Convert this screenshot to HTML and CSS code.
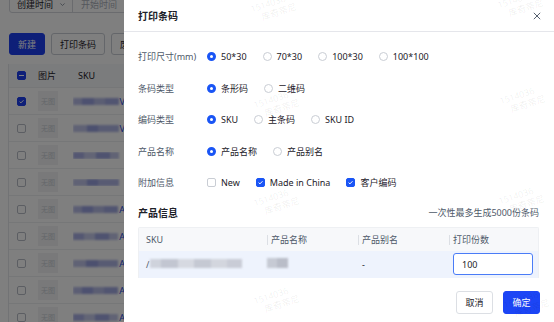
FILE: index.html
```html
<!DOCTYPE html>
<html lang="zh">
<head>
<meta charset="utf-8">
<title>打印条码</title>
<link rel="stylesheet" href="styles.css">
</head>
<body>
<div class="bg">
  <div class="filters">
    <div class="sel"><span>创建时间</span><svg class="chev" viewBox="0 0 10 10" width="7" height="7"><path d="M2 3.5 L5 6.5 L8 3.5" fill="none" stroke="#86909c" stroke-width="1.3"/></svg></div>
    <div class="range"><span>开始时间</span><span class="arr">→</span></div>
  </div>
  <div class="toolbar">
    <button class="bbtn primary">新建</button>
    <button class="bbtn">打印条码</button>
    <button class="bbtn">废弃</button>
  </div>
  <div class="list">
    <div class="lrow lhead"><span class="lcb ind"></span><span class="limg-h">图片</span><span class="lsku-h">SKU</span></div>
    <div class="lrow"><span class="lcb on"><svg viewBox="0 0 10 10"><path d="M2.3 5.2 L4.2 7 L7.8 3.2" fill="none" stroke="#fff" stroke-width="1.4"/></svg></span><span class="limg">无图</span><span class="lsku"><i class="b1"></i><b>V</b></span></div>
    <div class="lrow"><span class="lcb"></span><span class="limg">无图</span><span class="lsku"><i class="b2"></i><b>V</b></span></div>
    <div class="lrow"><span class="lcb"></span><span class="limg">无图</span><span class="lsku"><i class="b3"></i><b></b></span></div>
    <div class="lrow"><span class="lcb"></span><span class="limg">无图</span><span class="lsku"><i class="b2"></i><b></b></span></div>
    <div class="lrow"><span class="lcb"></span><span class="limg">无图</span><span class="lsku"><i class="b1"></i><b>A</b></span></div>
    <div class="lrow"><span class="lcb"></span><span class="limg">无图</span><span class="lsku"><i class="b3"></i><b>A</b></span></div>
    <div class="lrow"><span class="lcb"></span><span class="limg">无图</span><span class="lsku"><i class="b2"></i><b>A</b></span></div>
    <div class="lrow"><span class="lcb"></span><span class="limg">无图</span><span class="lsku"><i class="b1"></i><b>A</b></span></div>
    <div class="lrow"><span class="lcb"></span><span class="limg">无图</span><span class="lsku"><i class="b3"></i><b>A</b></span></div>
  </div>
</div>
<div class="mask"></div>
<aside class="drawer">
  <div class="d-head">
    <span class="d-title">打印条码</span>
    <svg class="close" viewBox="0 0 10 10" width="8" height="8"><path d="M1 1 L9 9 M9 1 L1 9" stroke="#4e5969" stroke-width="1.2"/></svg>
  </div>
  <div class="d-body">
    <div class="frow">
      <span class="flabel">打印尺寸(mm)</span>
      <div class="opts">
        <label class="opt"><span class="radio on"></span>50*30</label>
        <label class="opt"><span class="radio"></span>70*30</label>
        <label class="opt"><span class="radio"></span>100*30</label>
        <label class="opt"><span class="radio"></span>100*100</label>
      </div>
    </div>
    <div class="frow">
      <span class="flabel">条码类型</span>
      <div class="opts">
        <label class="opt"><span class="radio on"></span>条形码</label>
        <label class="opt"><span class="radio"></span>二维码</label>
      </div>
    </div>
    <div class="frow">
      <span class="flabel">编码类型</span>
      <div class="opts">
        <label class="opt"><span class="radio on"></span>SKU</label>
        <label class="opt"><span class="radio"></span>主条码</label>
        <label class="opt"><span class="radio"></span>SKU ID</label>
      </div>
    </div>
    <div class="frow">
      <span class="flabel">产品名称</span>
      <div class="opts">
        <label class="opt"><span class="radio on"></span>产品名称</label>
        <label class="opt"><span class="radio"></span>产品别名</label>
      </div>
    </div>
    <div class="frow">
      <span class="flabel">附加信息</span>
      <div class="opts">
        <label class="opt"><span class="check"></span>New</label>
        <label class="opt"><span class="check on"><svg viewBox="0 0 10 10"><path d="M2.3 5.2 L4.2 7 L7.8 3.2" fill="none" stroke="#fff" stroke-width="1.4"/></svg></span>Made in China</label>
        <label class="opt"><span class="check on"><svg viewBox="0 0 10 10"><path d="M2.3 5.2 L4.2 7 L7.8 3.2" fill="none" stroke="#fff" stroke-width="1.4"/></svg></span>客户编码</label>
      </div>
    </div>
    <div class="sec">
      <span class="sec-title">产品信息</span>
      <span class="sec-hint">一次性最多生成5000份条码</span>
    </div>
    <div class="ptable">
      <div class="prow phead">
        <div class="pc c1">SKU</div>
        <div class="pc c2 sep">产品名称</div>
        <div class="pc c3 sep">产品别名</div>
        <div class="pc c4 sep">打印份数</div>
      </div>
      <div class="prow pbody">
        <div class="pc c1"><span class="slash">/</span><i class="pblur"></i></div>
        <div class="pc c2"><i class="pblur2"></i></div>
        <div class="pc c3">-</div>
        <div class="pc c4"><input class="num" type="text" value="100"></div>
      </div>
    </div>
    <div class="foot">
      <button class="btn">取消</button>
      <button class="btn primary">确定</button>
    </div>
  </div>
  <div class="wm w1"><span>1514036</span><span>库奇蒂尼</span></div>
  <div class="wm w2"><span>1514036</span><span>库奇蒂尼</span></div>
  <div class="wm w3"><span>1514036</span><span>库奇蒂尼</span></div>
  <div class="wm w4"><span>1514036</span><span>库奇蒂尼</span></div>
  <div class="wm w5"><span>1514036</span><span>库奇蒂尼</span></div>
  <div class="wm w6"><span>1514036</span><span>库奇蒂尼</span></div>
  <div class="wm w7"><span>1514036</span><span>库奇蒂尼</span></div>
  <div class="wm w8"><span>1514036</span><span>库奇蒂尼</span></div>
</aside>
</body>
</html>
```

FILE: styles.css
```css
* { box-sizing: border-box; }
html, body { margin: 0; padding: 0; }
body {
  width: 554px;
  height: 322px;
  overflow: hidden;
  position: relative;
  font-family: "Noto Sans", "Noto Sans CJK SC", sans-serif;
  font-size: 9px;
  color: #1d2129;
  background: #fff;
}

/* ---------- background page ---------- */
.bg {
  width: 554px;
  height: 322px;
  background: #fff;
}
.filters {
  display: flex;
  margin: -5px 0 0 9px;
  height: 18px;
  border: 1px solid #d4d7dd;
  border-radius: 3px;
  width: 140px;
}
.sel {
  display: flex;
  align-items: center;
  justify-content: space-between;
  width: 63px;
  padding: 0 6px 0 7px;
  border-right: 1px solid #d4d7dd;
}
.range {
  display: flex;
  align-items: center;
  gap: 8px;
  padding-left: 8px;
  color: #a9aeb8;
}
.toolbar {
  display: flex;
  gap: 6px;
  margin: 20px 0 0 9px;
}
.bbtn {
  height: 22px;
  padding: 0 8px;
  border: 1px solid #c9cdd4;
  border-radius: 3px;
  background: #fff;
  font: inherit;
  color: #1d2129;
}
.bbtn.primary {
  width: 36px;
  background: #1d3ff0;
  border-color: #1d3ff0;
  color: #fff;
}
.list {
  margin: 9px 0 0 8px;
  border-left: 1px solid #e5e6eb;
}
.lrow {
  display: flex;
  align-items: center;
  height: 27px;
  border-bottom: 1px solid #eceef1;
}
.lrow.lhead {
  height: 24px;
  background: #f7f8fa;
}
.lcb {
  width: 9px;
  height: 9px;
  margin-left: 8px;
  border: 1px solid #b8bdc6;
  border-radius: 2px;
  background: #fff;
  display: flex;
  align-items: center;
  justify-content: center;
}
.lcb svg { width: 9px; height: 9px; }
.lcb.on, .lcb.ind { background: #1d3ff0; border-color: #1d3ff0; }
.lcb.ind::after {
  content: "";
  width: 5px;
  height: 1.5px;
  background: #fff;
}
.limg-h { margin-left: 12px; }
.lsku-h { margin-left: 22px; }
.limg {
  margin-left: 12px;
  width: 20px;
  height: 20px;
  background: #f2f3f5;
  color: #c9cdd4;
  font-size: 7px;
  display: flex;
  align-items: center;
  justify-content: center;
}
.lsku {
  margin-left: 15px;
  display: flex;
  align-items: center;
  width: 52px;
  overflow: hidden;
}
.lsku i {
  display: block;
  width: 46px;
  height: 7px;
  filter: blur(1px);
}
.lsku b { font-weight: normal; color: #2a4bd8; margin-left: 1px; }
.b1 { background: linear-gradient(90deg, #b8bde8 0 20%, #9aa2e0 20% 45%, #b7bce6 45% 70%, #a3aae2 70% 100%); }
.b2 { background: linear-gradient(90deg, #c0c4ea 0 30%, #98a0de 30% 55%, #b0b6e6 55% 100%); }
.b3 { background: linear-gradient(90deg, #a9afe4 0 25%, #c6cbec 25% 50%, #9ea6e0 50% 80%, #c2c7ea 80% 100%); }

.mask {
  position: absolute;
  inset: 0;
  background: rgba(0, 0, 0, 0.5);
}

/* ---------- drawer ---------- */
.drawer {
  position: absolute;
  top: 0;
  right: 0;
  width: 430px;
  height: 322px;
  background: #fff;
  overflow: hidden;
}
.d-head {
  height: 32px;
  border-bottom: 1px solid #e5e6eb;
  display: flex;
  align-items: center;
  justify-content: space-between;
  padding: 0 13px 0 14px;
}
.d-title {
  font-size: 10px;
  font-weight: 700;
  color: #1d2129;
}
.d-body {
  padding: 9px 14px 0;
}
.frow {
  display: flex;
  align-items: center;
  height: 31.5px;
}
.flabel {
  width: 69px;
  color: #4e5969;
}
.opts {
  display: flex;
  align-items: center;
  gap: 16px;
}
.opt {
  display: flex;
  align-items: center;
  gap: 5px;
  color: #1d2129;
}
.radio {
  width: 9px;
  height: 9px;
  border-radius: 50%;
  border: 1px solid #c9cdd4;
  background: #fff;
}
.radio.on {
  border: 3px solid #1a55f5;
}
.check {
  width: 9px;
  height: 9px;
  border-radius: 2px;
  border: 1px solid #c9cdd4;
  background: #fff;
  display: flex;
  align-items: center;
  justify-content: center;
}
.check.on {
  background: #1a55f5;
  border-color: #1a55f5;
}
.check svg { width: 9px; height: 9px; }

.sec {
  display: flex;
  align-items: center;
  justify-content: space-between;
  height: 28px;
  padding-right: 1px;
}
.sec-title {
  font-size: 10px;
  font-weight: 700;
}
.sec-hint { color: #4e5969; }

.ptable {
  border: 1px solid #eef0f3;
  border-bottom: none;
  border-radius: 2px 2px 0 0;
  margin-right: 1px;
}
.prow {
  display: flex;
  align-items: center;
}
.phead {
  height: 23px;
  background: #f7f8fa;
  color: #4e5969;
}
.pbody {
  height: 27px;
  background: #eef3fd;
}
.pc {
  position: relative;
  display: flex;
  align-items: center;
  height: 100%;
  padding: 0 8px;
}
.c1 { width: 124px; padding-left: 7px; }
.c2 { width: 91px; }
.c3 { width: 91px; }
.c4 { flex: 1; padding-right: 5px; }
.sep::before {
  content: "";
  position: absolute;
  left: 4px;
  top: 7px;
  width: 1px;
  height: 10px;
  background: #dcdfe4;
}
.slash { color: #4e5969; margin-right: 1px; }
.pblur {
  display: block;
  width: 92px;
  height: 9px;
  margin-top: -2px;
  filter: blur(1px);
  background: linear-gradient(90deg, #cfd3dc 0 12%, #c2c6d1 12% 30%, #d6d9e1 30% 48%, #c5c9d3 48% 66%, #d3d6de 66% 84%, #c9ccd6 84% 100%);
}
.pblur2 {
  display: block;
  width: 21px;
  height: 10px;
  margin-left: -4px;
  margin-top: -2px;
  filter: blur(0.8px);
  background: linear-gradient(90deg, #c6cad4 0 50%, #b9bdc8 50% 100%);
}
.num {
  width: 100%;
  height: 22px;
  border: 1px solid #4a7cf7;
  border-radius: 3px;
  background: #fff;
  padding: 0 8px;
  font: inherit;
  color: #1d2129;
  outline: none;
}
.foot {
  display: flex;
  justify-content: flex-end;
  gap: 10px;
  margin-top: 13px;
}
.btn {
  width: 37px;
  height: 23px;
  border: 1px solid #dcdfe4;
  border-radius: 3px;
  background: #fff;
  font: inherit;
  color: #1d2129;
  padding: 0;
}
.btn.primary {
  background: #1c45f5;
  border-color: #1c45f5;
  color: #fff;
}

/* watermarks */
.wm {
  position: absolute;
  display: flex;
  flex-direction: column;
  align-items: flex-start;
  font-size: 9px;
  line-height: 11px;
  color: rgba(0, 0, 0, 0.07);
  transform: rotate(-18deg);
  transform-origin: left top;
  pointer-events: none;
}
.wm span:last-child { margin-left: 8px; }
.w1 { left: 125px; top: 4px; }
.w2 { left: 372px; top: 0px; }
.w3 { left: 128px; top: 100px; }
.w4 { left: 374px; top: 96px; }
.w5 { left: 128px; top: 198px; }
.w6 { left: 373px; top: 196px; }
.w7 { left: 128px; top: 296px; }
.w8 { left: 378px; top: 300px; }
```
